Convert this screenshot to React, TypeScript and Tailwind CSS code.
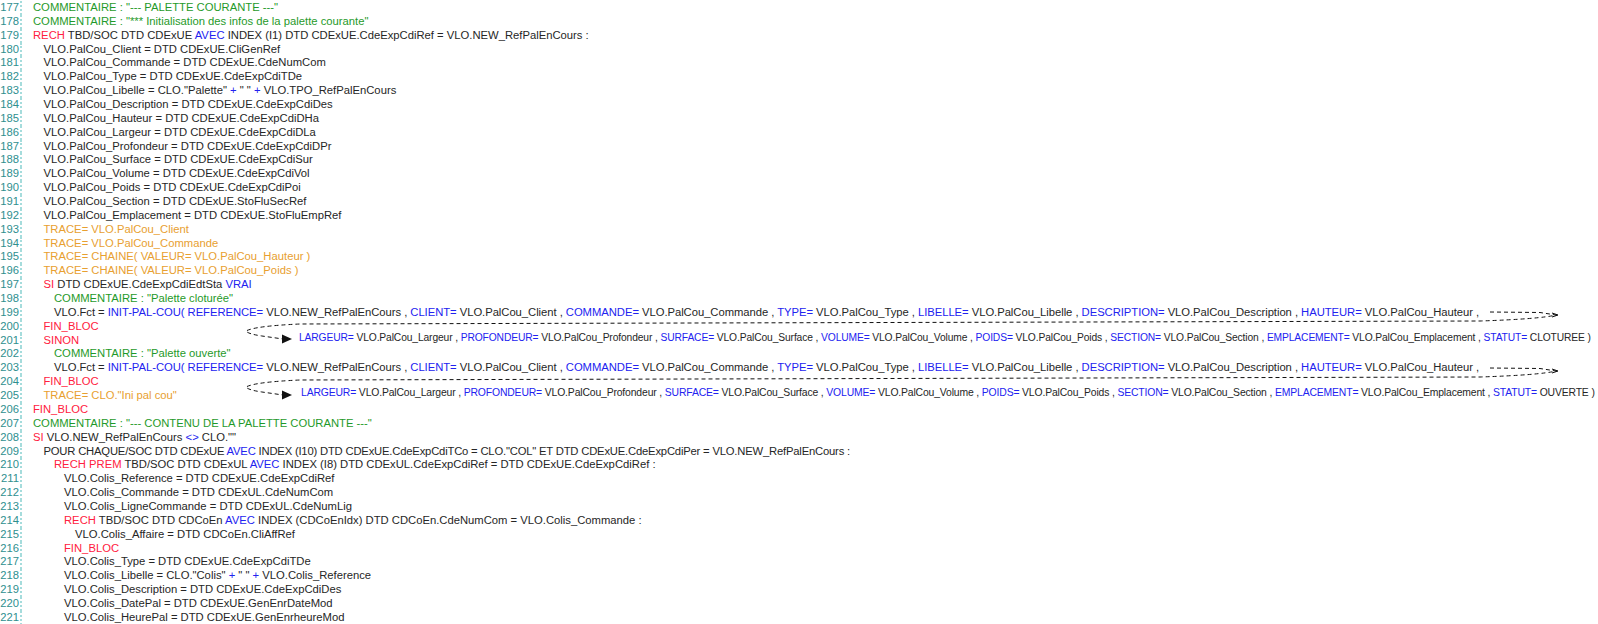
type S = [string, string];
const g = (t: string): S => [t, "g"];
const r = (t: string): S => [t, "r"];
const k = (t: string): S => [t, "k"];
const b = (t: string): S => [t, "b"];
const o = (t: string): S => [t, "o"];

const cls: Record<string, string> = {
  g: "text-[#1f9a2a]",
  r: "text-[#ff2040]",
  k: "text-[#262626]",
  b: "text-[#2222f0]",
  o: "text-[#e8a030]",
};

const pal1: S[] = [
  k("VLO.Fct = "), b("INIT-PAL-COU("), k(" "), b("REFERENCE="), k(" VLO.NEW_RefPalEnCours , "), b("CLIENT="), k(" VLO.PalCou_Client , "), b("COMMANDE="), k(" VLO.PalCou_Commande , "), b("TYPE="), k(" VLO.PalCou_Type , "), b("LIBELLE="), k(" VLO.PalCou_Libelle , "), b("DESCRIPTION="), k(" VLO.PalCou_Description , "), b("HAUTEUR="), k(" VLO.PalCou_Hauteur ,"),
];
const cont = (st: string): S[] => [
  b("LARGEUR="), k(" VLO.PalCou_Largeur , "), b("PROFONDEUR="), k(" VLO.PalCou_Profondeur , "), b("SURFACE="), k(" VLO.PalCou_Surface , "), b("VOLUME="), k(" VLO.PalCou_Volume , "), b("POIDS="), k(" VLO.PalCou_Poids , "), b("SECTION="), k(" VLO.PalCou_Section , "), b("EMPLACEMENT="), k(" VLO.PalCou_Emplacement , "), b("STATUT="), k(" " + st + " )"),
];

const rows: { i: number; s: S[]; c?: S[]; cp?: string; t?: string }[] = [
  { i: 0, s: [g('COMMENTAIRE : "--- PALETTE COURANTE ---"')] },
  { i: 0, s: [g('COMMENTAIRE : "*** Initialisation des infos de la palette courante"')] },
  { i: 0, s: [r("RECH"), k(" TBD/SOC DTD CDExUE "), b("AVEC"), k(" INDEX (I1) DTD CDExUE.CdeExpCdiRef = VLO.NEW_RefPalEnCours :")] },
  { i: 1, s: [k("VLO.PalCou_Client = DTD CDExUE.CliGenRef")] },
  { i: 1, s: [k("VLO.PalCou_Commande = DTD CDExUE.CdeNumCom")] },
  { i: 1, s: [k("VLO.PalCou_Type = DTD CDExUE.CdeExpCdiTDe")] },
  { i: 1, s: [k('VLO.PalCou_Libelle = CLO."Palette" '), b("+"), k(' " " '), b("+"), k(" VLO.TPO_RefPalEnCours")] },
  { i: 1, s: [k("VLO.PalCou_Description = DTD CDExUE.CdeExpCdiDes")] },
  { i: 1, s: [k("VLO.PalCou_Hauteur = DTD CDExUE.CdeExpCdiDHa")] },
  { i: 1, s: [k("VLO.PalCou_Largeur = DTD CDExUE.CdeExpCdiDLa")] },
  { i: 1, s: [k("VLO.PalCou_Profondeur = DTD CDExUE.CdeExpCdiDPr")] },
  { i: 1, s: [k("VLO.PalCou_Surface = DTD CDExUE.CdeExpCdiSur")] },
  { i: 1, s: [k("VLO.PalCou_Volume = DTD CDExUE.CdeExpCdiVol")] },
  { i: 1, s: [k("VLO.PalCou_Poids = DTD CDExUE.CdeExpCdiPoi")] },
  { i: 1, s: [k("VLO.PalCou_Section = DTD CDExUE.StoFluSecRef")] },
  { i: 1, s: [k("VLO.PalCou_Emplacement = DTD CDExUE.StoFluEmpRef")] },
  { i: 1, s: [o("TRACE= VLO.PalCou_Client")] },
  { i: 1, s: [o("TRACE= VLO.PalCou_Commande")] },
  { i: 1, s: [o("TRACE= CHAINE( VALEUR= VLO.PalCou_Hauteur )")] },
  { i: 1, s: [o("TRACE= CHAINE( VALEUR= VLO.PalCou_Poids )")] },
  { i: 1, s: [r("SI"), k(" DTD CDExUE.CdeExpCdiEdtSta "), b("VRAI")] },
  { i: 2, s: [g('COMMENTAIRE : "Palette cloturée"')] },
  { i: 2, s: pal1, t: "tracking-[-0.04px]" },
  { i: 1, s: [r("FIN_BLOC")] },
  { i: 1, s: [r("SINON")], c: cont("CLOTUREE"), cp: "left-[277px] text-[10.28px] tracking-[-0.117px]" },
  { i: 2, s: [g('COMMENTAIRE : "Palette ouverte"')] },
  { i: 2, s: pal1, t: "tracking-[-0.04px]" },
  { i: 1, s: [r("FIN_BLOC")] },
  { i: 1, s: [o('TRACE= CLO."Ini pal cou"')], c: cont("OUVERTE"), cp: "left-[279px] text-[10.4px] tracking-[-0.15px]" },
  { i: 0, s: [r("FIN_BLOC")] },
  { i: 0, s: [g('COMMENTAIRE : "--- CONTENU DE LA PALETTE COURANTE ---"')] },
  { i: 0, s: [r("SI"), k(" VLO.NEW_RefPalEnCours "), b("<>"), k(' CLO.""')] },
  { i: 1, s: [k("POUR CHAQUE/SOC DTD CDExUE "), b("AVEC"), k(' INDEX (I10) DTD CDExUE.CdeExpCdiTCo = CLO."COL" ET DTD CDExUE.CdeExpCdiPer = VLO.NEW_RefPalEnCours :')], t: "tracking-[-0.19px]" },
  { i: 2, s: [r("RECH PREM"), k(" TBD/SOC DTD CDExUL "), b("AVEC"), k(" INDEX (I8) DTD CDExUL.CdeExpCdiRef = DTD CDExUE.CdeExpCdiRef :")] },
  { i: 3, s: [k("VLO.Colis_Reference = DTD CDExUE.CdeExpCdiRef")] },
  { i: 3, s: [k("VLO.Colis_Commande = DTD CDExUL.CdeNumCom")] },
  { i: 3, s: [k("VLO.Colis_LigneCommande = DTD CDExUL.CdeNumLig")] },
  { i: 3, s: [r("RECH"), k(" TBD/SOC DTD CDCoEn "), b("AVEC"), k(" INDEX (CDCoEnIdx) DTD CDCoEn.CdeNumCom = VLO.Colis_Commande :")] },
  { i: 4, s: [k("VLO.Colis_Affaire = DTD CDCoEn.CliAffRef")] },
  { i: 3, s: [r("FIN_BLOC")] },
  { i: 3, s: [k("VLO.Colis_Type = DTD CDExUE.CdeExpCdiTDe")] },
  { i: 3, s: [k('VLO.Colis_Libelle = CLO."Colis" '), b("+"), k(' " " '), b("+"), k(" VLO.Colis_Reference")] },
  { i: 3, s: [k("VLO.Colis_Description = DTD CDExUE.CdeExpCdiDes")] },
  { i: 3, s: [k("VLO.Colis_DatePal = DTD CDExUE.GenEnrDateMod")] },
  { i: 3, s: [k("VLO.Colis_HeurePal = DTD CDExUE.GenEnrheureMod")] },
];

const pad = ["pl-0", "pl-[10.5px]", "pl-[21px]", "pl-[31px]", "pl-[42px]"];

function Spans({ s }: { s: S[] }) {
  return (
    <>
      {s.map(([t, c], i) => (
        <span key={i} className={cls[c]}>{t}</span>
      ))}
    </>
  );
}

function Arrow({ className }: { className: string }) {
  return (
    <svg className={`absolute left-0 ${className}`} width="1598" height="50" viewBox="0 0 1598 50">
      <path d="M1490 12 L1540 12.5 L1556 15 Q1540 19 1480 21 L300 24 Q255 26 246 31 Q248 34 262 36 L283 39" fill="none" stroke="#111" strokeWidth="1" strokeDasharray="4 3" />
      <path d="M1552 13 L1558 15 L1552 17" fill="none" stroke="#111" strokeWidth="1" />
      <polygon points="282,34.5 292,39 282,43.5" fill="#111" />
    </svg>
  );
}

export default function App() {
  return (
    <div className="relative w-[1598px] h-[624px] overflow-hidden bg-white font-['Liberation_Sans',Arial,sans-serif] text-[11.25px]">
      <div className="flex flex-col pt-px">
        {rows.map((row, i) => (
          <div key={i} className="flex h-[13.86px] leading-[13.86px] whitespace-nowrap">
            <div className="w-[22px] shrink-0 pr-px text-right text-[#2f8f8f] border-r-2 border-dotted border-[#a5dcdc] box-border">{177 + i}</div>
            <div className="pl-[11px] flex-1 relative">
              <div className={`${pad[row.i]} ${row.t ?? ""}`}><Spans s={row.s} /></div>
              {row.c && (
                <div className={`absolute top-[-3px] ${row.cp}`}><Spans s={row.c} /></div>
              )}
            </div>
          </div>
        ))}
      </div>
      <Arrow className="top-[300px]" />
      <Arrow className="top-[356px]" />
    </div>
  );
}
